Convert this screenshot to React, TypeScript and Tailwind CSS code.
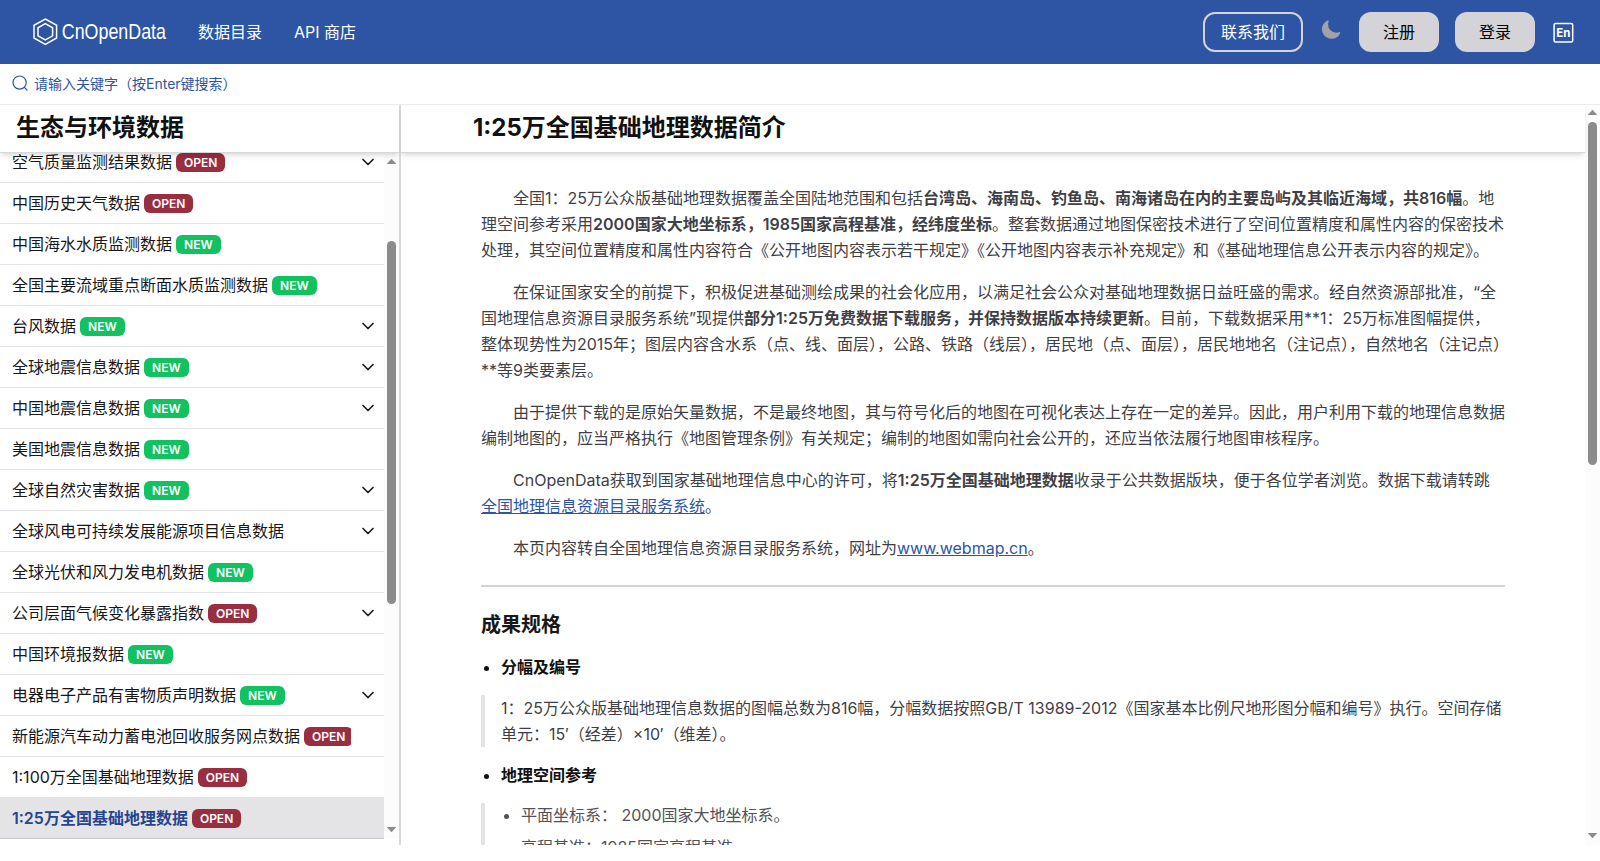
import type { ReactNode } from "react";
import { ChevronDown } from "lucide-react";

type Tag = "NEW" | "OPEN";

interface Entry {
  label: string;
  tag?: Tag;
  expandable?: boolean;
  active?: boolean;
}

const entries: Entry[] = [
  { label: "空气质量监测结果数据", tag: "OPEN", expandable: true },
  { label: "中国历史天气数据", tag: "OPEN" },
  { label: "中国海水水质监测数据", tag: "NEW" },
  { label: "全国主要流域重点断面水质监测数据", tag: "NEW" },
  { label: "台风数据", tag: "NEW", expandable: true },
  { label: "全球地震信息数据", tag: "NEW", expandable: true },
  { label: "中国地震信息数据", tag: "NEW", expandable: true },
  { label: "美国地震信息数据", tag: "NEW" },
  { label: "全球自然灾害数据", tag: "NEW", expandable: true },
  { label: "全球风电可持续发展能源项目信息数据", expandable: true },
  { label: "全球光伏和风力发电机数据", tag: "NEW" },
  { label: "公司层面气候变化暴露指数", tag: "OPEN", expandable: true },
  { label: "中国环境报数据", tag: "NEW" },
  { label: "电器电子产品有害物质声明数据", tag: "NEW", expandable: true },
  { label: "新能源汽车动力蓄电池回收服务网点数据", tag: "OPEN" },
  { label: "1:100万全国基础地理数据", tag: "OPEN" },
  { label: "1:25万全国基础地理数据", tag: "OPEN", active: true },
];

function Logo() {
  return (
    <svg width="142" height="32" viewBox="0 0 142 32" className="block" aria-label="CnOpenData">
      <g fill="none" stroke="#fff" strokeLinejoin="miter">
        <path d="M13.3 3 L24.6 9.3 V22 L13.3 28.4 L2 22 V9.3 Z" strokeWidth="1.5" />
        <path d="M13.3 7.6 L20.6 11.8 V19.8 L13.3 24 L6 19.8 V11.8 Z" strokeWidth="1.5" />
      </g>
      <text
        x="29.8"
        y="23.4"
        fill="#fff"
        fontSize="22.5"
        textLength="104.2"
        lengthAdjust="spacingAndGlyphs"
        className="font-['Liberation_Sans',sans-serif]"
      >
        CnOpenData
      </text>
    </svg>
  );
}

function Header() {
  return (
    <header className="flex h-16 shrink-0 items-center bg-[#2d55a4] pl-8 pr-[25px] text-base text-white">
      <Logo />
      <nav className="ml-6 flex gap-8">
        <a>数据目录</a>
        <a>API 商店</a>
      </nav>
      <div className="ml-auto flex items-center gap-4">
        <button className="h-10 w-[100px] rounded-xl border-2 border-[#d4d4d8]">联系我们</button>
        <svg width="24" height="24" viewBox="-1.08 -1.3 26.67 26.67" className="mb-1" aria-hidden="true">
          <path
            fill="#a1a1aa"
            fillRule="evenodd"
            d="M9.528 1.718a.75.75 0 0 1 .162.819A8.97 8.97 0 0 0 9 6a9 9 0 0 0 9 9 8.97 8.97 0 0 0 3.463-.69.75.75 0 0 1 .981.98 10.503 10.503 0 0 1-9.694 6.46c-5.799 0-10.5-4.7-10.5-10.5 0-4.368 2.667-8.112 6.46-9.694a.75.75 0 0 1 .818.162Z"
          />
        </svg>
        <button className="h-10 w-20 rounded-xl bg-[#d4d4d8] text-black">注册</button>
        <button className="h-10 w-20 rounded-xl bg-[#d4d4d8] text-black">登录</button>
        <svg width="24" height="24" viewBox="0 0 24 24" aria-label="En">
          <rect x="3.1" y="3.4" width="18.6" height="18.6" rx="1.6" fill="none" stroke="#fff" strokeWidth="1.5" />
          <text x="12.3" y="16.8" fill="#fff" fontSize="11.5" fontWeight="700" textAnchor="middle">
            En
          </text>
        </svg>
      </div>
    </header>
  );
}

function Scrollbar({ children }: { children: ReactNode }) {
  return (
    <div className="flex w-[15px] shrink-0 flex-col items-center bg-[#fcfcfc] pb-[7px] pt-1.5">
      <svg width="9" height="5" viewBox="0 0 9 5" className="shrink-0" aria-hidden="true">
        <path d="M4.5 0 L9 5 H0 Z" fill="#8b8b8b" stroke="#8b8b8b" strokeWidth="0.5" />
      </svg>
      {children}
      <svg width="9" height="5" viewBox="0 0 9 5" className="mt-auto shrink-0" aria-hidden="true">
        <path d="M4.5 5 L9 0 H0 Z" fill="#8b8b8b" stroke="#8b8b8b" strokeWidth="0.5" />
      </svg>
    </div>
  );
}

function Badge({ tag }: { tag: Tag }) {
  return (
    <span
      className={
        "ml-1 mt-px flex h-[19px] shrink-0 items-center rounded-md px-2 pt-px text-xs font-semibold leading-none text-white " +
        (tag === "NEW" ? "bg-[#12c15f]" : "bg-[#982e40]")
      }
    >
      {tag}
    </span>
  );
}

function Sidebar() {
  return (
    <aside className="flex w-[401px] shrink-0 flex-col border-r-2 border-[#d8d8da]">
      <h2 className="z-10 flex h-[49px] shrink-0 items-center border-b border-[#d8d8da] bg-white pl-4 text-2xl font-bold text-[#111] shadow-md">
        生态与环境数据
      </h2>
      <div className="flex h-[686px] overflow-hidden">
        <ul className="-mt-[11px] min-w-0 flex-1">
          {entries.map((e) => (
            <li
              key={e.label}
              className={
                "flex h-[41px] items-center border-b pl-3 pr-1.5 " +
                (e.active
                  ? "border-[#c6c6c9] bg-[#e4e4e7] font-semibold text-[#26458f]"
                  : "border-[#e4e4e7] text-[#18181b]")
              }
            >
              <div className="flex w-[339px] items-center overflow-hidden whitespace-nowrap">
                <span>{e.label}</span>
                {e.tag && <Badge tag={e.tag} />}
              </div>
              {e.expandable && <ChevronDown className="ml-auto size-5 text-[#18181b]" strokeWidth={2} />}
            </li>
          ))}
        </ul>
        <Scrollbar>
          <div className="mt-[77px] h-[363px] w-[9px] rounded-full bg-[#8b8b8b]" />
        </Scrollbar>
      </div>
    </aside>
  );
}

function Article() {
  return (
    <div className="mx-auto w-[1024px] pt-8 leading-[26px] text-[#3f3f46]">
      <div className="flex flex-col gap-4 [&>p]:indent-8">
        <p>
          全国1：25万公众版基础地理数据覆盖全国陆地范围和包括
          <strong className="font-semibold">
            台湾岛、海南岛、钓鱼岛、南海诸岛在内的主要岛屿及其临近海域，共816幅
          </strong>
          。地理空间参考采用
          <strong className="font-semibold">2000国家大地坐标系，1985国家高程基准，经纬度坐标</strong>
          。整套数据通过地图保密技术进行了空间位置精度和属性内容的保密技术处理，其空间位置精度和属性内容符合《公开地图内容表示若干规定》《公开地图内容表示补充规定》和《基础地理信息公开表示内容的规定》。
        </p>
        <p>
          在保证国家安全的前提下，积极促进基础测绘成果的社会化应用，以满足社会公众对基础地理数据日益旺盛的需求。经自然资源部批准，“全国地理信息资源目录服务系统”现提供
          <strong className="font-semibold">部分1:25万免费数据下载服务，并保持数据版本持续更新</strong>
          。目前，下载数据采用**1：25万标准图幅提供，整体现势性为2015年；图层内容含水系（点、线、面层），公路、铁路（线层），居民地（点、面层），居民地地名（注记点），自然地名（注记点）**等9类要素层。
        </p>
        <p>
          由于提供下载的是原始矢量数据，不是最终地图，其与符号化后的地图在可视化表达上存在一定的差异。因此，用户利用下载的地理信息数据编制地图的，应当严格执行《地图管理条例》有关规定；编制的地图如需向社会公开的，还应当依法履行地图审核程序。
        </p>
        <p>
          CnOpenData获取到国家基础地理信息中心的许可，将
          <strong className="font-semibold">1:25万全国基础地理数据</strong>
          收录于公共数据版块，便于各位学者浏览。数据下载请转跳
          <a className="text-[#2d55a4] underline">全国地理信息资源目录服务系统</a>。
        </p>
        <p>
          本页内容转自全国地理信息资源目录服务系统，网址为
          <a className="text-[#2d55a4] underline">www.webmap.cn</a>。
        </p>
      </div>
      <hr className="my-6 border-t-2 border-[#d4d4d8]" />
      <h3 className="mb-[15px] text-xl font-semibold leading-7 text-[#18181b]">成果规格</h3>
      <ul className="list-disc pl-5 font-semibold text-[#111]">
        <li>分幅及编号</li>
      </ul>
      <blockquote className="my-[15px] border-l-4 border-[#e4e4e7] pl-4">
        1：25万公众版基础地理信息数据的图幅总数为816幅，分幅数据按照GB/T 13989-2012《国家基本比例尺地形图分幅和编号》执行。空间存储单元：15′（经差）×10′（维差）。
      </blockquote>
      <ul className="list-disc pl-5 font-semibold text-[#111]">
        <li>地理空间参考</li>
      </ul>
      <blockquote className="mt-[15px] flow-root border-l-4 border-[#e4e4e7] pl-4 text-[#52525b]">
        <ul className="-mt-px flex list-disc flex-col gap-1.5 pl-5">
          <li>平面坐标系： 2000国家大地坐标系。</li>
          <li>高程基准：1985国家高程基准。</li>
        </ul>
      </blockquote>
    </div>
  );
}

export default function App() {
  return (
    <div
      lang="zh-CN"
      className="flex h-[861px] w-[1600px] flex-col overflow-hidden bg-white font-['Inter','Noto_Sans_CJK_SC',sans-serif] text-base"
    >
      <Header />
      <div className="z-20 flex h-[41px] shrink-0 items-center gap-1.5 border-b border-[#ececee] bg-white pl-3 text-sm text-[#2d55a4]">
        <svg
          width="16"
          height="16"
          viewBox="0 0 16 16"
          fill="none"
          stroke="currentColor"
          strokeWidth="1.2"
          className="mb-0.5"
          aria-hidden="true"
        >
          <circle cx="7.6" cy="7.6" r="6.6" />
          <path d="M12.4 12.4 L15 15" strokeLinecap="round" />
        </svg>
        <span>请输入关键字（按Enter键搜索）</span>
      </div>
      <div className="-mt-px flex h-[741px] shrink-0">
        <Sidebar />
        <main className="flex min-w-0 flex-1 overflow-hidden">
          <div className="flex min-w-0 flex-1 flex-col">
            <h1 className="z-10 flex h-[49px] shrink-0 items-center border-b border-[#d8d8da] bg-white pl-[72px] text-2xl font-bold text-[#111] shadow-md">
              1:25万全国基础地理数据简介
            </h1>
            <Article />
          </div>
          <Scrollbar>
            <div className="mt-[7px] h-[343px] w-[9px] rounded-full bg-[#8b8b8b]" />
          </Scrollbar>
        </main>
      </div>
    </div>
  );
}
